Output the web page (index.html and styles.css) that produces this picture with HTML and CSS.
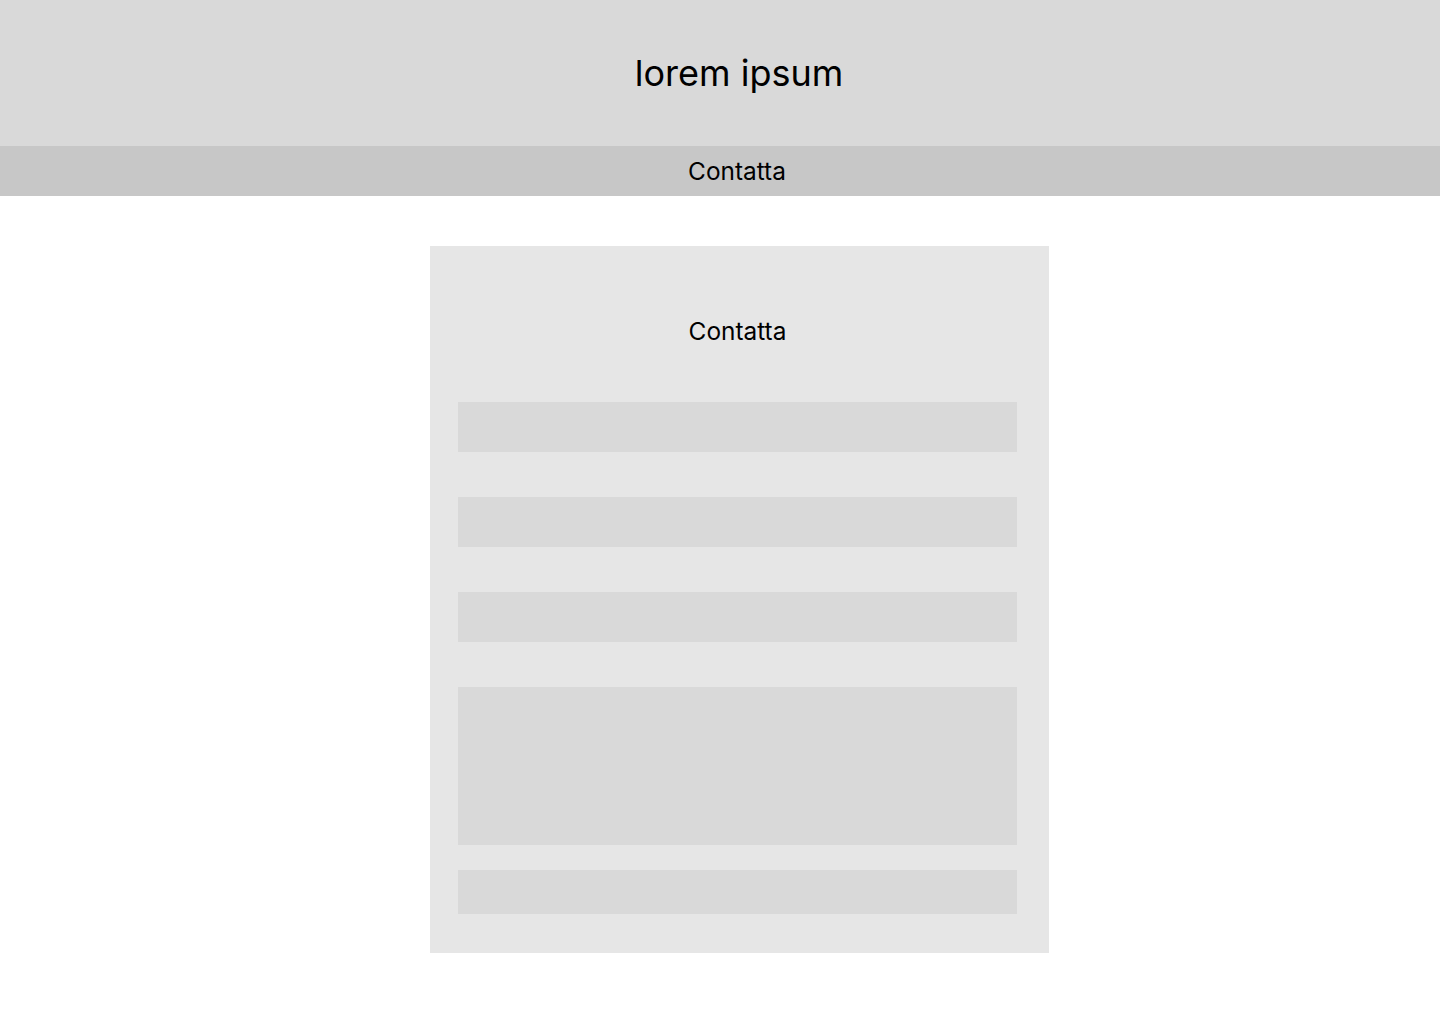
FILE: index.html
```html
<!DOCTYPE html>
<html lang="it">
<head>
<meta charset="utf-8">
<title>lorem ipsum</title>
<link rel="stylesheet" href="styles.css">
</head>
<body>
<header class="header">
  <h1 class="site-title">lorem ipsum</h1>
</header>
<nav class="nav">
  <span class="nav-item">Contatta</span>
</nav>
<main class="main">
  <form class="card">
    <h2 class="card-title">Contatta</h2>
    <div class="fields">
      <div class="field"></div>
      <div class="field"></div>
      <div class="field"></div>
      <div class="field field-area"></div>
      <div class="field field-button"></div>
    </div>
  </form>
</main>
</body>
</html>
```

FILE: styles.css
```css
* { box-sizing: border-box; }
html, body { margin: 0; padding: 0; }
body {
  background: #ffffff;
  font-family: Inter, "Noto Sans", sans-serif;
  color: #000000;
  width: 1440px;
}
.header {
  height: 146px;
  background: #d9d9d9;
  display: flex;
  align-items: center;
  justify-content: center;
  padding-left: 38px;
}
.site-title {
  margin: 0;
  font-size: 36px;
  font-weight: 400;
  line-height: 1;
}
.nav {
  height: 50px;
  background: #c7c7c7;
  display: flex;
  align-items: center;
  justify-content: center;
  padding-left: 34px;
}
.nav-item {
  font-size: 24.4px;
  line-height: 1;
}
.main {
  padding: 50px 0 71px 430px;
}
.card {
  width: 619px;
  height: 707px;
  background: #e6e6e6;
  padding: 0 32px 0 28px;
  display: flex;
  flex-direction: column;
}
.card-title {
  margin: 0;
  height: 156px;
  font-size: 24.4px;
  font-weight: 400;
  line-height: 1;
  display: flex;
  align-items: center;
  justify-content: center;
  padding-top: 14px;
}
.fields {
  display: flex;
  flex-direction: column;
}
.field {
  height: 50px;
  background: #d9d9d9;
  margin-bottom: 45px;
}
.field-area {
  height: 158px;
  margin-bottom: 25px;
}
.field-button {
  height: 44px;
  margin-bottom: 0;
}
```
